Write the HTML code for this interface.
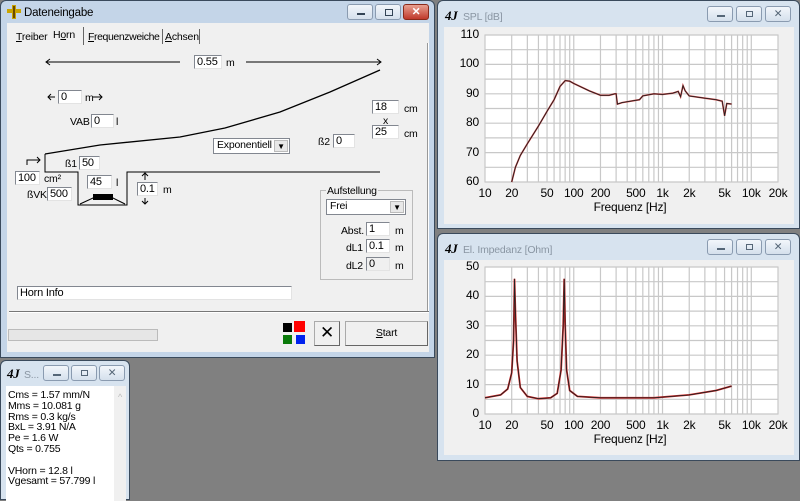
<!DOCTYPE html>
<html><head><meta charset="utf-8">
<style>
*{margin:0;padding:0;box-sizing:border-box}
body{width:800px;height:494px;background:#808080;position:relative;overflow:hidden;font-family:"Liberation Sans",sans-serif;font-size:10.5px;letter-spacing:-0.2px;color:#000}
.a{position:absolute}
.win{position:absolute;border:1px solid #3a4a5c;border-radius:6px 6px 0 0;background:#c4d5e8}
.win.in{background:#d7e3ef}
.client{position:absolute;background:#f0f0f0}
.tb{position:absolute;background:#fff;border:1px solid #828790;border-right-color:#e3e3e3;border-bottom-color:#e3e3e3;padding-left:2px;line-height:12px;font-size:11px}
.btn{position:absolute;height:16px;border:1px solid #8a9bb0;border-radius:3px;background:linear-gradient(#f2f6fb,#d5e0ec)}
.lbl{position:absolute;font-size:10.5px;line-height:12px;white-space:nowrap}
.sel{position:absolute;background:#fff;border:1px solid #828790;padding-left:3px;line-height:13px;font-size:10.5px}
.sel i{position:absolute;right:1px;top:1px;bottom:1px;width:14px;background:#e8e8e8;border:1px solid #bbb;font-style:normal;font-size:8px;text-align:center;line-height:12px}
</style></head><body>

<div class="win" style="left:0;top:0;width:435px;height:358px;">
  <div class="a" style="left:6px;top:4px;width:14px;height:14px;">
    <svg width="14" height="14"><rect x="5" y="0" width="4" height="14" fill="#c9a400"/><rect x="0" y="4" width="14" height="4" fill="#c9a400"/><rect x="6" y="1" width="2" height="12" fill="#6b4a00"/></svg>
  </div>
  <div class="lbl" style="left:23px;top:6px;font-size:11.5px;">Dateneingabe</div>
  <div class="btn" style="left:346px;top:3px;width:26px;"><div class="a" style="left:9px;top:8px;width:8px;height:2px;background:#345"></div></div>
  <div class="btn" style="left:374px;top:3px;width:26px;"><div class="a" style="left:9px;top:4px;width:8px;height:7px;border:1px solid #345"></div></div>
  <div class="btn" style="left:402px;top:3px;width:26px;background:linear-gradient(#e8a090,#c0392b);border-color:#8a2a1a;color:#fff;text-align:center;font-weight:bold;line-height:14px">✕</div>

  <div class="client" style="left:6px;top:22px;width:422px;height:329px;">
    <div class="lbl" style="left:9px;top:8px;"><u>T</u>reiber</div>
    <div class="lbl" style="left:46px;top:6px;">H<u>o</u>rn</div>
    <div class="a" style="left:76px;top:4px;width:1px;height:18px;background:#666"></div>
    <div class="lbl" style="left:81px;top:8px;letter-spacing:-0.4px"><u>F</u>requenzweiche</div>
    <div class="a" style="left:155px;top:6px;width:1px;height:15px;background:#666"></div>
    <div class="lbl" style="left:158px;top:8px;"><u>A</u>chsen</div>
    <div class="a" style="left:192px;top:6px;width:1px;height:15px;background:#666"></div>
    <div class="a" style="left:420px;top:20px;width:2px;height:270px;border-left:1px solid #999;border-right:1px solid #fff"></div>
    <div class="a" style="left:2px;top:288px;width:420px;height:2px;border-top:1px solid #777;border-bottom:1px solid #fff"></div>

    <div class="a" style="left:1px;top:306px;width:150px;height:12px;border:1px solid #bbb;background:#e6e6e6"></div>
    <div class="a" style="left:276px;top:300px;width:9px;height:9px;background:#000"></div>
    <div class="a" style="left:287px;top:298px;width:11px;height:11px;background:#f00"></div>
    <div class="a" style="left:276px;top:312px;width:9px;height:9px;background:#0a7a0a"></div>
    <div class="a" style="left:289px;top:312px;width:9px;height:9px;background:#0022ee"></div>
    <div class="a" style="left:307px;top:298px;width:26px;height:25px;border:1px solid #aaa;border-right-color:#666;border-bottom-color:#666;background:#f0f0f0;text-align:center;font-size:17px;line-height:22px">✕</div>
    <div class="a" style="left:338px;top:298px;width:83px;height:25px;border:1px solid #aaa;border-right-color:#666;border-bottom-color:#666;background:#f0f0f0;text-align:center;line-height:22px"><u>S</u>tart</div>
  </div>
</div>

<svg class="a" style="left:0;top:0" width="434" height="310">
  <g stroke="#000" stroke-width="1" fill="none">
    <line x1="46" y1="62" x2="180" y2="62"/><polyline points="50,59 46,62 50,65"/>
    <line x1="246" y1="62" x2="381" y2="62"/><polyline points="377,59 381,62 377,65"/>
    <path d="M45,154 L100,145 L180,137 L225,128 L280,112 L330,92 L380,70" stroke-width="1.3"/>
    <polyline points="45,154 45,172 78,172 78,205 127,205 127,172 380,172"/>
    <line x1="48" y1="97" x2="55" y2="97"/><polyline points="51,94 48,97 51,100"/>
    <line x1="93" y1="97" x2="102" y2="97"/><polyline points="99,94 102,97 99,100"/>
    <polyline points="27,165 27,160 40,160"/><polyline points="37,157 40,160 37,163"/>
    <line x1="145" y1="173" x2="145" y2="180"/><polyline points="142,176 145,173 148,176"/>
    <line x1="145" y1="198" x2="145" y2="204"/><polyline points="142,201 145,204 148,201"/>
    <polyline points="80,204 93,198 113,198 125,204" />
  </g>
  <rect x="93" y="194" width="20" height="6" fill="#000"/>
</svg>
<div class="tb" style="left:194px;top:55px;width:28px;height:14px">0.55</div><div class="lbl" style="left:226px;top:57px">m</div>
<div class="tb" style="left:58px;top:90px;width:24px;height:14px">0</div><div class="lbl" style="left:85px;top:92px">m</div>
<div class="lbl" style="left:70px;top:116px">VAB</div><div class="tb" style="left:91px;top:114px;width:23px;height:14px">0</div><div class="lbl" style="left:116px;top:116px">l</div>
<div class="sel" style="left:213px;top:138px;width:77px;height:16px">Exponentiell<i>▼</i></div>
<div class="lbl" style="left:318px;top:136px">ß2</div><div class="tb" style="left:333px;top:134px;width:22px;height:14px">0</div>
<div class="tb" style="left:372px;top:100px;width:27px;height:14px">18</div><div class="lbl" style="left:404px;top:103px">cm</div>
<div class="lbl" style="left:383px;top:115px">x</div>
<div class="tb" style="left:372px;top:125px;width:27px;height:14px">25</div><div class="lbl" style="left:404px;top:128px">cm</div>
<div class="lbl" style="left:65px;top:158px">ß1</div><div class="tb" style="left:79px;top:156px;width:21px;height:14px">50</div>
<div class="tb" style="left:15px;top:171px;width:25px;height:14px">100</div><div class="lbl" style="left:44px;top:173px">cm²</div>
<div class="lbl" style="left:27px;top:189px">ßVK</div><div class="tb" style="left:47px;top:187px;width:25px;height:14px">500</div>
<div class="tb" style="left:87px;top:175px;width:25px;height:14px">45</div><div class="lbl" style="left:116px;top:177px">l</div>
<div class="tb" style="left:137px;top:182px;width:21px;height:14px">0.1</div><div class="lbl" style="left:163px;top:184px">m</div>
<div class="a" style="left:320px;top:190px;width:93px;height:90px;border:1px solid #bbb"></div>
<div class="lbl" style="left:326px;top:185px;background:#f0f0f0;padding:0 1px">Aufstellung</div>
<div class="sel" style="left:326px;top:199px;width:80px;height:16px">Frei<i>▼</i></div>
<div class="lbl" style="left:341px;top:225px">Abst.</div><div class="tb" style="left:366px;top:222px;width:24px;height:14px">1</div><div class="lbl" style="left:395px;top:225px">m</div>
<div class="lbl" style="left:346px;top:242px">dL1</div><div class="tb" style="left:366px;top:239px;width:24px;height:14px">0.1</div><div class="lbl" style="left:395px;top:242px">m</div>
<div class="lbl" style="left:346px;top:260px">dL2</div><div class="tb" style="left:366px;top:257px;width:24px;height:14px;background:#f0f0f0">0</div><div class="lbl" style="left:395px;top:260px">m</div>
<div class="tb" style="left:17px;top:286px;width:275px;height:14px">Horn Info</div>

<div class="win in" style="left:437px;top:0;width:363px;height:229px;">
  <div class="lbl" style="left:7px;top:7px;font:italic bold 13px 'Liberation Serif',serif">4J</div>
  <div class="lbl" style="left:25px;top:10px;color:#8a96a3">SPL [dB]</div>
  <div class="btn" style="left:269px;top:5px;width:26px;"><div class="a" style="left:9px;top:8px;width:8px;height:2px;background:#567"></div></div>
  <div class="btn" style="left:298px;top:5px;width:26px;"><div class="a" style="left:9px;top:4px;width:7px;height:6px;border:1px solid #567"></div></div>
  <div class="btn" style="left:327px;top:5px;width:26px;text-align:center;line-height:14px;color:#567">✕</div>
  <div class="client" style="left:6px;top:26px;width:350px;height:197px"></div>
</div>
<div class="win in" style="left:437px;top:233px;width:363px;height:228px;">
  <div class="lbl" style="left:7px;top:7px;font:italic bold 13px 'Liberation Serif',serif">4J</div>
  <div class="lbl" style="left:25px;top:10px;color:#8a96a3">El. Impedanz [Ohm]</div>
  <div class="btn" style="left:269px;top:5px;width:26px;"><div class="a" style="left:9px;top:8px;width:8px;height:2px;background:#567"></div></div>
  <div class="btn" style="left:298px;top:5px;width:26px;"><div class="a" style="left:9px;top:4px;width:7px;height:6px;border:1px solid #567"></div></div>
  <div class="btn" style="left:327px;top:5px;width:26px;text-align:center;line-height:14px;color:#567">✕</div>
  <div class="client" style="left:6px;top:26px;width:350px;height:195px"></div>
</div>
<svg id="plots" class="a" style="left:0;top:0" width="800" height="494"></svg>
<div id="labels"></div>

<div class="win in" style="left:0;top:360px;width:130px;height:140px;">
  <div class="lbl" style="left:6px;top:5px;font:italic bold 13px 'Liberation Serif',serif">4J</div>
  <div class="lbl" style="left:23px;top:8px;color:#8a96a3">S...</div>
  <div class="btn" style="left:42px;top:4px;width:26px;"><div class="a" style="left:9px;top:8px;width:8px;height:2px;background:#567"></div></div>
  <div class="btn" style="left:70px;top:4px;width:26px;"><div class="a" style="left:9px;top:4px;width:7px;height:6px;border:1px solid #567"></div></div>
  <div class="btn" style="left:98px;top:4px;width:26px;text-align:center;line-height:14px;color:#567">✕</div>
  <div class="a" style="left:5px;top:25px;width:108px;height:115px;background:#fff;padding:4px 2px;line-height:10.8px;font-size:10.5px">Cms = 1.57 mm/N<br>Mms = 10.081 g<br>Rms = 0.3 kg/s<br>BxL = 3.91 N/A<br>Pe = 1.6 W<br>Qts = 0.755<br><br>VHorn = 12.8 l<br>Vgesamt = 57.799 l</div>
  <div class="a" style="left:113px;top:25px;width:12px;height:115px;background:#f0f0f0;color:#bbb;font-size:9px;text-align:center;padding-top:6px">^</div>
</div>

<script>
const svg=document.getElementById('plots'),lab=document.getElementById('labels');
const X0=485,X1=778,PD=(X1-X0)/Math.log10(2000);
const fx=f=>X0+PD*Math.log10(f/10);
let s='';
function plot(top,bot,ticks){
  s+=`<rect x="${X0}" y="${top}" width="${X1-X0}" height="${bot-top}" fill="#fff" stroke="#bbb"/>`;
  for(let d=10;d<=10000;d*=10)for(let k=1;k<10;k++){let x=fx(d*k);if(x<=X1+0.5)s+=`<line x1="${x}" y1="${top}" x2="${x}" y2="${bot}" stroke="#c8c8c8" stroke-width="1.2"/>`;}
  s+=`<line x1="${X1}" y1="${top}" x2="${X1}" y2="${bot}" stroke="#c8c8c8"/>`;
  for(let i=0;i<=10;i++){let y=top+(bot-top)*i/10;s+=`<line x1="${X0}" y1="${y}" x2="${X1}" y2="${y}" stroke="#c8c8c8" stroke-width="1.2"/>`;}
  ticks.forEach((t,i)=>{let y=top+(bot-top)*i/5;lab.innerHTML+=`<div class="lbl" style="left:${X0-32}px;top:${y-7}px;width:26px;text-align:right;font-size:12px">${t}</div>`;});
  [[10,'10'],[20,'20'],[50,'50'],[100,'100'],[200,'200'],[500,'500'],[1000,'1k'],[2000,'2k'],[5000,'5k'],[10000,'10k'],[20000,'20k']].forEach(([f,t])=>{lab.innerHTML+=`<div class="lbl" style="left:${fx(f)-20}px;top:${bot+5}px;width:40px;text-align:center;font-size:12px">${t}</div>`;});
  lab.innerHTML+=`<div class="lbl" style="left:${X0+70}px;top:${bot+19}px;width:150px;text-align:center;font-size:12px">Frequenz [Hz]</div>`;
}
function line(pts,conv,col,w){s+=`<polyline fill="none" stroke="${col}" stroke-width="${w}" points="${pts.map(p=>fx(p[0]).toFixed(1)+','+conv(p[1]).toFixed(1)).join(' ')}"/>`;}
plot(35,182,[110,100,90,80,70,60]);
const dy=v=>182-(v-60)*2.94;
const spl=[[20,60],[22,65],[25,69],[30,73],[40,79],[50,84],[60,88],[70,92.5],[80,94.5],[90,94.3],[100,93.5],[150,91],[200,89.5],[250,89.5],[290,90],[300,90],[310,86.5],[350,87],[500,87.8],[550,88],[600,89.3],[800,90],[1000,89.8],[1300,90.2],[1500,90.8],[1600,89],[1700,92.8],[1800,91],[2000,89.3],[3000,88.5],[4000,88],[4700,87.5],[5000,82.5],[5300,86.7],[6000,86.5]];
line(spl,dy,'#d44','1.6');line(spl,dy,'#222','0.9');
plot(267,414,[50,40,30,20,10,0]);
const dz=v=>414-v*2.94;
const imp=[[10,5.5],[15,6.5],[18,8.5],[20,14],[21,25],[21.5,46],[22,35],[23,18],[25,9],[30,6],[40,5.2],[55,5.5],[65,7],[72,15],[76,30],[78,46],[80,30],[83,15],[90,8],[110,6],[200,5.5],[800,5.5],[2000,6.5],[4000,8],[6000,9.5]];
line(imp,dz,'#d22','1.8');line(imp,dz,'#222','0.9');
svg.innerHTML=s;
</script>
</body></html>
